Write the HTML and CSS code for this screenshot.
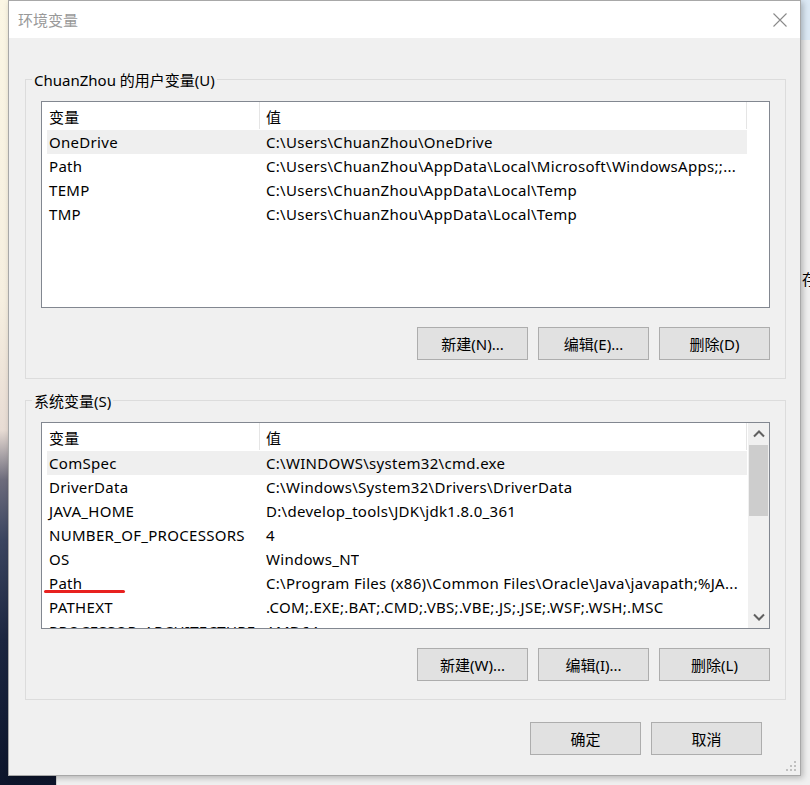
FILE: index.html
```html
<!DOCTYPE html>
<html lang="zh-CN">
<head>
<meta charset="utf-8">
<title>环境变量</title>
<link rel="stylesheet" href="styles.css">
</head>
<body>
<div class="desktop">
  <div class="bgwin">
    <div class="bgwin-top"></div>
    <span class="bg-char">存</span>
  </div>
  <div class="dialog">
    <div class="titlebar">
      <span class="title">环境变量</span>
      <svg class="close" width="14" height="14" viewBox="0 0 14 14"><path d="M0.5 0.5 L13.5 13.5 M13.5 0.5 L0.5 13.5" stroke="#8a8a8a" stroke-width="1.1" fill="none"/></svg>
    </div>
    <div class="content">
      <fieldset class="group">
        <legend>ChuanZhou 的用户变量(U)</legend>
        <div class="listview">
          <div class="lv-main">
            <div class="lv-header"><div class="hc h1">变量</div><div class="hc h2">值</div></div>
            <div class="lv-rows">
              <div class="row sel"><span class="c1">OneDrive</span><span class="c2">C:\Users\ChuanZhou\OneDrive</span></div>
              <div class="row"><span class="c1">Path</span><span class="c2">C:\Users\ChuanZhou\AppData\Local\Microsoft\WindowsApps;;...</span></div>
              <div class="row"><span class="c1">TEMP</span><span class="c2">C:\Users\ChuanZhou\AppData\Local\Temp</span></div>
              <div class="row"><span class="c1">TMP</span><span class="c2">C:\Users\ChuanZhou\AppData\Local\Temp</span></div>
            </div>
          </div>
        </div>
        <div class="btnrow">
          <button class="btn">新建(N)...</button>
          <button class="btn">编辑(E)...</button>
          <button class="btn">删除(D)</button>
        </div>
      </fieldset>

      <fieldset class="group group2">
        <legend>系统变量(S)</legend>
        <div class="listview">
          <div class="lv-main">
            <div class="lv-header"><div class="hc h1">变量</div><div class="hc h2">值</div></div>
            <div class="lv-rows">
              <div class="row sel"><span class="c1">ComSpec</span><span class="c2">C:\WINDOWS\system32\cmd.exe</span></div>
              <div class="row"><span class="c1">DriverData</span><span class="c2">C:\Windows\System32\Drivers\DriverData</span></div>
              <div class="row"><span class="c1">JAVA_HOME</span><span class="c2">D:\develop_tools\JDK\jdk1.8.0_361</span></div>
              <div class="row"><span class="c1">NUMBER_OF_PROCESSORS</span><span class="c2">4</span></div>
              <div class="row"><span class="c1">OS</span><span class="c2">Windows_NT</span></div>
              <div class="row marked"><span class="c1">Path</span><span class="c2">C:\Program Files (x86)\Common Files\Oracle\Java\javapath;%JA...</span><span class="redline"></span></div>
              <div class="row"><span class="c1">PATHEXT</span><span class="c2">.COM;.EXE;.BAT;.CMD;.VBS;.VBE;.JS;.JSE;.WSF;.WSH;.MSC</span></div>
              <div class="row"><span class="c1">PROCESSOR_ARCHITECTURE</span><span class="c2">AMD64</span></div>
            </div>
          </div>
          <div class="scrollbar">
            <div class="sb-arrow">
              <svg width="12" height="8" viewBox="0 0 12 8"><path d="M1 6.5 L6 1.5 L11 6.5" stroke="#606060" stroke-width="2" fill="none"/></svg>
            </div>
            <div class="sb-track"><div class="sb-thumb"></div></div>
            <div class="sb-arrow">
              <svg width="12" height="8" viewBox="0 0 12 8"><path d="M1 1.5 L6 6.5 L11 1.5" stroke="#606060" stroke-width="2" fill="none"/></svg>
            </div>
          </div>
        </div>
        <div class="btnrow">
          <button class="btn">新建(W)...</button>
          <button class="btn">编辑(I)...</button>
          <button class="btn">删除(L)</button>
        </div>
      </fieldset>

      <div class="footer">
        <button class="btn">确定</button>
        <button class="btn">取消</button>
      </div>
    </div>
    <svg class="grip" width="12" height="12" viewBox="0 0 12 12">
      <rect x="8" y="0" width="2" height="2" fill="#c0c0c0"/>
      <rect x="4" y="4" width="2" height="2" fill="#c0c0c0"/>
      <rect x="8" y="4" width="2" height="2" fill="#c0c0c0"/>
      <rect x="0" y="8" width="2" height="2" fill="#c0c0c0"/>
      <rect x="4" y="8" width="2" height="2" fill="#c0c0c0"/>
      <rect x="8" y="8" width="2" height="2" fill="#c0c0c0"/>
    </svg>
  </div>
</div>
</body>
</html>
```

FILE: styles.css
```css
* { box-sizing: border-box; }
html, body { margin: 0; padding: 0; }
body {
  width: 810px;
  height: 785px;
  overflow: hidden;
  font-family: "Noto Sans", "Noto Sans CJK SC", sans-serif;
  font-size: 15px;
  color: #000;
}
.desktop {
  position: relative;
  width: 810px;
  height: 785px;
  overflow: hidden;
  background: linear-gradient(180deg, #fbf6e4 0px, #f6efe0 300px, #e8dcd4 430px, #6d6c7c 480px, #3b4560 540px, #1c2640 640px, #0d152b 785px);
}
.bgwin {
  position: absolute;
  left: 56px;
  top: 0;
  width: 800px;
  height: 800px;
  background: #f0f0f0;
  border-left: 1px solid #d0d0d0;
}
.bgwin-top {
  height: 40px;
  margin-left: 740px;
  background: #dce9f5;
}
.bg-char {
  position: absolute;
  left: 745px;
  top: 268px;
  font-size: 15px;
}
.dialog {
  position: absolute;
  left: 8px;
  top: 0;
  width: 793px;
  height: 776px;
  background: #f0f0f0;
  border: 1px solid #a8a8a8;
  box-shadow: 2px 2px 6px rgba(0,0,0,0.25);
}
.titlebar {
  height: 37px;
  background: #fff;
  display: flex;
  align-items: center;
  justify-content: space-between;
  padding: 0 13px 0 9px;
}
.title {
  color: #999;
  font-size: 15px;
}
.close { display: block; }
.content {
  padding-top: 31px;
  padding-left: 16px;
}
.group {
  width: 761px;
  margin: 0;
  padding: 12px 15px 18px 15px;
  border: 1px solid #dcdcdc;
}
.group legend {
  padding: 0 2px;
  margin-left: -9px;
  line-height: 20px;
  height: 20px;
  position: relative;
  top: 1px;
}
.group2 { margin-top: 11px; }
.listview {
  height: 207px;
  border: 1px solid #828790;
  background: #fff;
  display: flex;
  overflow: hidden;
}
.lv-main {
  flex: 1;
  min-width: 0;
  overflow: hidden;
  letter-spacing: 0.3px;
}
.lv-header {
  display: flex;
  height: 27px;
}
.hc {
  line-height: 27px;
  padding-top: 2px;
  border-right: 1px solid #e5e5e5;
  white-space: nowrap;
}
.h1 { width: 218px; padding-left: 7px; }
.h2 { width: 487px; padding-left: 6px; }
.lv-rows { display: flex; flex-direction: column; padding-top: 1px; }
.row {
  position: relative;
  display: flex;
  margin-left: 5px;
  width: 700px;
  height: 24px;
  line-height: 24px;
  white-space: nowrap;
  flex-shrink: 0;
}
.row.sel { background: #efefef; }
.c1 { width: 217px; padding-left: 2px; flex-shrink: 0; overflow: hidden; }
.c2 { padding-left: 2px; overflow: hidden; }
.redline {
  position: absolute;
  left: -3px;
  top: 19px;
  width: 81px;
  height: 3px;
  background: #e8211f;
  border-radius: 2px;
}
.scrollbar {
  width: 21px;
  flex-shrink: 0;
  background: #f0f0f0;
  display: flex;
  flex-direction: column;
}
.sb-arrow {
  height: 22px;
  display: flex;
  align-items: center;
  justify-content: center;
}
.sb-arrow svg { display: block; }
.sb-track { flex: 1; padding: 0 1px; }
.sb-thumb { height: 71px; background: #cdcdcd; }
.btnrow {
  display: flex;
  justify-content: flex-end;
  gap: 10px;
  margin-top: 19px;
}
.btn {
  width: 111px;
  height: 33px;
  background: #e1e1e1;
  border: 1px solid #adadad;
  font-family: inherit;
  font-size: 15px;
  color: #000;
  padding: 0;
  margin: 0;
}
.footer {
  display: flex;
  justify-content: flex-end;
  gap: 10px;
  margin-top: 22px;
  padding-right: 38px;
}
.grip {
  position: absolute;
  right: 2px;
  bottom: 2px;
}
```
